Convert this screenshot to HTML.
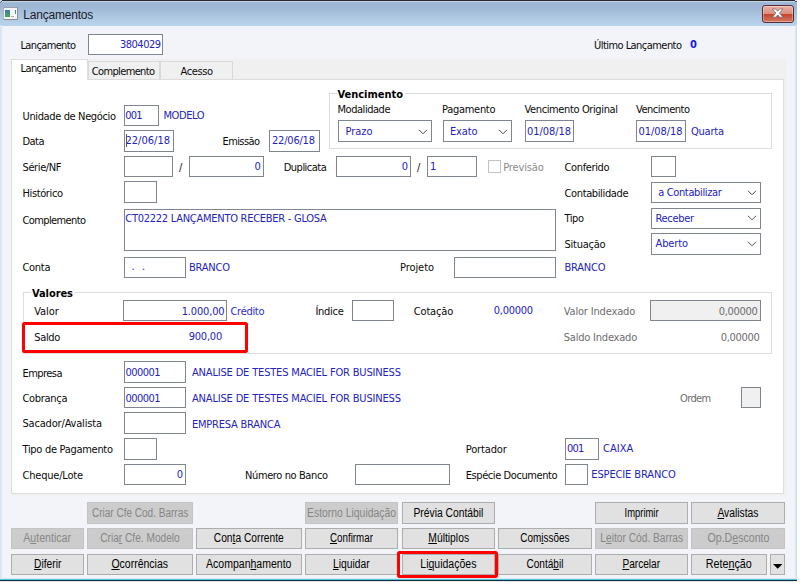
<!DOCTYPE html>
<html lang="pt-BR"><head><meta charset="utf-8"><title>Lançamentos</title>
<style>
html,body{margin:0;padding:0;background:#fff;}
body{width:800px;height:582px;overflow:hidden;position:relative;font-family:"DejaVu Sans Condensed","DejaVu Sans","Liberation Sans",sans-serif;font-stretch:condensed;font-size:11px;}
#win{position:absolute;left:0;top:0;width:797px;height:582px;background:#f3f4fa;overflow:hidden;}
#top{position:absolute;left:0;top:0;width:797px;height:1px;background:#2a2a2a;}
#tb{position:absolute;left:0;top:1px;width:797px;height:24.5px;background:linear-gradient(#c4d4e6 0,#c4d4e6 1px,#9cb5d2 1.6px,#9fb9d6 30%,#aec8e3 65%,#bbd4ed 100%);}
#title{position:absolute;left:23.3px;top:7.6px;font-family:"Liberation Sans",sans-serif;font-size:12px;letter-spacing:-0.2px;line-height:14px;color:#1a1a2a;white-space:nowrap;}
#bl,#br{position:absolute;top:25px;width:2px;height:554px;background:linear-gradient(90deg,#d6e4f5,#dfe9f6);}
#br{background:linear-gradient(90deg,#e2eaf6,#c8dbf0);}
#bl{left:0}#br{left:795px}
#b1{position:absolute;left:0;top:578px;width:797px;height:1px;background:#d9e6f5;}
#b2{position:absolute;left:0;top:579px;width:797px;height:1px;background:#58c4dc;}
#b3{position:absolute;left:0;top:580px;width:797px;height:1px;background:#06343f;}
#b4{position:absolute;left:0;top:581px;width:797px;height:1px;background:#eceae8;}
.px{position:absolute;width:1px;height:1px;}
.t{position:absolute;white-space:nowrap;line-height:14px;height:14px;}
.b{font-weight:bold;}
.bgw{background:#fff;}
.a{position:absolute;}
.in{position:absolute;box-sizing:border-box;background:#fff;border:1px solid #80868e;}
.dis{background:#f0f0f0;}
.chk{position:absolute;box-sizing:border-box;background:#fff;border:1px solid #c3c3c3;}
.caret{position:absolute;background:#555;}
.tabbg{position:absolute;background:#f0f0f0;}
.panel{position:absolute;box-sizing:border-box;background:#fff;border:1px solid #dcdcdc;}
.tab{position:absolute;box-sizing:border-box;background:#f0f0f0;border:1px solid #d9d9d9;border-bottom:none;}
.tab.sel{background:#fff;border-color:#dcdcdc;}
.grp{position:absolute;box-sizing:border-box;border:1px solid #dcdcdc;}
.red{position:absolute;box-sizing:border-box;border:3px solid #ff0000;border-radius:2.5px;}
.btn{position:absolute;box-sizing:border-box;background:#e1e1e1;border:1px solid #adadad;font-family:"Liberation Sans",sans-serif;font-size:12.5px;line-height:19.4px;text-align:center;color:#000;white-space:nowrap;overflow:visible;}
.bt{display:inline-block;transform-origin:50% 50%;margin:0 -20px;}
.bt u{text-underline-offset:1px;}
.bd{background:#cccccc;border-color:#c4c4c4;color:#868686;}
</style></head>
<body>
<div id="win">
<div id="tb"></div><div id="top"></div><div class="px" style="left:0;top:0;width:2px;background:#c9d8ea"></div><div class="px" style="left:0;top:1px;background:#b5c6da"></div><div class="px" style="left:1px;top:1px;background:#5a6572"></div><div class="px" style="left:0;top:2px;background:#6f7d8d"></div><div class="px" style="left:795px;top:0;width:2px;background:#dfe8f2"></div><div class="px" style="left:795px;top:1px;width:2px;background:#2f5560"></div><div style="position:absolute;left:3px;top:7px;width:15px;height:13px;box-sizing:border-box;background:#f6f6f6;border:1px solid #b4b8bd;border-right-color:#8f9398;border-bottom-color:#8a8e94;border-top-color:#9da1a7"><div style="position:absolute;left:1px;top:2px;width:5px;height:7px;background:linear-gradient(160deg,#3a74b6,#3f9a78 60%,#46a45c)"></div><div style="position:absolute;left:11px;top:2px;width:1px;height:4px;background:linear-gradient(#3a66c4,#48a868)"></div><div style="position:absolute;left:7px;top:8px;width:3px;height:1px;background:#aaa"></div></div><div id="title">Lançamentos</div><div id="cls" style="position:absolute;left:762px;top:5px;width:32px;height:18px;box-sizing:border-box;border:1px solid #5b2b3c;border-radius:3px;background:linear-gradient(#e9b0a4 0,#dc8f80 48%,#c4432b 52%,#d27a64 100%);box-shadow:inset 0 0 0 1px rgba(255,255,255,.35);"><svg width="30" height="16" viewBox="0 0 30 16" style="position:absolute;left:0;top:0"><path d="M9.4 3 L12.6 3 L14.7 5.2 L16.8 3 L20 3 L16.5 7.1 L20 11.2 L16.8 11.2 L14.7 9 L12.6 11.2 L9.4 11.2 L12.9 7.1 Z" fill="#fff" stroke="#6a6f7a" stroke-width="0.8"/></svg></div>
<div id="bl"></div><div id="br"></div>
<span id="t1" class="t" style="left:20.5px;top:38.5px;color:#0a0a0a;letter-spacing:-0.644px;">Lançamento</span>
<div class="in" style="left:88px;top:34px;width:75px;height:21px;"></div>
<span id="t2" class="t" style="right:636.5px;top:37.5px;color:#2323c0;letter-spacing:-0.512px;">3804029</span>
<span id="t3" class="t" style="left:594px;top:38.5px;color:#0a0a0a;letter-spacing:-0.547px;">Último Lançamento</span>
<span id="t4" class="t b" style="left:690px;top:37.5px;color:#1414f0;letter-spacing:-0.391px;">0</span>
<div class="tabbg" style="left:11px;top:59px;width:775px;height:436px;"></div>
<div class="panel" style="left:11px;top:79px;width:773px;height:415px;"></div>
<div class="tab" style="left:88px;top:61px;width:72px;height:18px;"></div>
<div class="tab" style="left:160px;top:61px;width:72.5px;height:18px;"></div>
<div class="tab sel" style="left:11px;top:59px;width:77px;height:21px;"></div>
<span id="t5" class="t" style="left:20.5px;top:62px;color:#0a0a0a;letter-spacing:-0.588px;">Lançamento</span>
<span id="t6" class="t" style="left:91.75px;top:64.75px;color:#0a0a0a;letter-spacing:-0.642px;">Complemento</span>
<span id="t7" class="t" style="left:180.5px;top:64.75px;color:#0a0a0a;letter-spacing:-0.395px;">Acesso</span>
<span id="t8" class="t" style="left:22.5px;top:109.5px;color:#0a0a0a;letter-spacing:-0.367px;">Unidade de Negócio</span>
<div class="in" style="left:123.5px;top:105px;width:35.5px;height:21px;"></div>
<span id="t9" class="t" style="left:125.2px;top:108.5px;color:#2323c0;letter-spacing:-0.744px;">001</span>
<span id="t10" class="t" style="left:163.5px;top:108.5px;color:#2323c0;letter-spacing:-0.422px;">MODELO</span>
<span id="t11" class="t" style="left:22.5px;top:135px;color:#0a0a0a;letter-spacing:-0.547px;">Data</span>
<div class="in" style="left:123.5px;top:130px;width:50.5px;height:21.5px;"></div>
<span id="t12" class="t" style="left:125.5px;top:134px;color:#2323c0;letter-spacing:0.008px;">22/06/18</span>
<div class="caret" style="left:125.5px;top:134px;width:1.5px;height:13px;"></div>
<span id="t13" class="t" style="left:222.5px;top:135px;color:#0a0a0a;letter-spacing:-0.596px;">Emissão</span>
<div class="in" style="left:269px;top:130px;width:50.5px;height:21.5px;"></div>
<span id="t14" class="t" style="left:272px;top:134px;color:#2323c0;letter-spacing:-0.206px;">22/06/18</span>
<div class="grp" style="left:329px;top:93px;width:443px;height:56px;"></div>
<span id="t15" class="t b bgw" style="left:336.5px;top:88px;color:#000;letter-spacing:-0.020px;padding:0 2px 0 1px;">Vencimento</span>
<span id="t16" class="t" style="left:337.5px;top:103px;color:#0a0a0a;letter-spacing:-0.463px;">Modalidade</span>
<span id="t17" class="t" style="left:442px;top:103px;color:#0a0a0a;letter-spacing:-0.290px;">Pagamento</span>
<span id="t18" class="t" style="left:524.5px;top:103px;color:#0a0a0a;letter-spacing:-0.377px;">Vencimento Original</span>
<span id="t19" class="t" style="left:636px;top:103px;color:#0a0a0a;letter-spacing:-0.491px;">Vencimento</span>
<div class="in" style="left:338px;top:120px;width:94px;height:22px;"></div>
<span id="t20" class="t" style="left:345.5px;top:124.5px;color:#2323c0;letter-spacing:-0.038px;">Prazo</span>
<svg class="a" style="left:418px;top:128.5px" width="10" height="6" viewBox="0 0 10 6"><path d="M1 0.8 L5 4.8 L9 0.8" fill="none" stroke="#505050" stroke-width="1"/></svg>
<div class="in" style="left:443px;top:120px;width:69px;height:22px;"></div>
<span id="t21" class="t" style="left:450px;top:124.5px;color:#2323c0;letter-spacing:-0.153px;">Exato</span>
<svg class="a" style="left:498px;top:128.5px" width="10" height="6" viewBox="0 0 10 6"><path d="M1 0.8 L5 4.8 L9 0.8" fill="none" stroke="#505050" stroke-width="1"/></svg>
<div class="in" style="left:524.5px;top:120px;width:49.5px;height:22px;"></div>
<span id="t22" class="t" style="left:527px;top:124.5px;color:#2323c0;letter-spacing:-0.063px;">01/08/18</span>
<div class="in" style="left:636px;top:120px;width:50px;height:22px;"></div>
<span id="t23" class="t" style="left:638.5px;top:124.5px;color:#2323c0;letter-spacing:-0.063px;">01/08/18</span>
<span id="t24" class="t" style="left:691px;top:124.5px;color:#2323c0;letter-spacing:-0.227px;">Quarta</span>
<span id="t25" class="t" style="left:22.5px;top:161px;color:#0a0a0a;letter-spacing:-0.388px;">Série/NF</span>
<div class="in" style="left:123.5px;top:156px;width:49.0px;height:21px;"></div>
<span id="t26" class="t" style="left:179px;top:161px;color:#0a0a0a;letter-spacing:0.000px;">/</span>
<div class="in" style="left:188.5px;top:156px;width:75.0px;height:21px;"></div>
<span id="t27" class="t" style="right:536.25px;top:160px;color:#2323c0;letter-spacing:0.000px;">0</span>
<span id="t28" class="t" style="left:283.75px;top:161px;color:#0a0a0a;letter-spacing:-0.516px;">Duplicata</span>
<div class="in" style="left:336px;top:156px;width:75px;height:21px;"></div>
<span id="t29" class="t" style="right:389px;top:160px;color:#2323c0;letter-spacing:0.000px;">0</span>
<span id="t30" class="t" style="left:417px;top:161px;color:#0a0a0a;letter-spacing:0.000px;">/</span>
<div class="in" style="left:427px;top:156px;width:49.5px;height:21px;"></div>
<span id="t31" class="t" style="left:430px;top:160px;color:#2323c0;letter-spacing:0.000px;">1</span>
<div class="chk" style="left:488px;top:160px;width:13px;height:13px;"></div>
<span id="t32" class="t" style="left:503.25px;top:161px;color:#8a8a8a;letter-spacing:-0.154px;">Previsão</span>
<span id="t33" class="t" style="left:564.5px;top:161px;color:#0a0a0a;letter-spacing:-0.370px;">Conferido</span>
<div class="in" style="left:650.5px;top:156px;width:25.0px;height:21px;"></div>
<span id="t34" class="t" style="left:22.5px;top:186.5px;color:#0a0a0a;letter-spacing:-0.387px;">Histórico</span>
<div class="in" style="left:123.5px;top:181px;width:33.5px;height:22px;"></div>
<span id="t35" class="t" style="left:564.5px;top:186.5px;color:#0a0a0a;letter-spacing:-0.371px;">Contabilidade</span>
<div class="in" style="left:650.5px;top:182px;width:110.5px;height:21px;"></div>
<span id="t36" class="t" style="left:658.25px;top:185.5px;color:#2323c0;letter-spacing:-0.365px;">a Contabilizar</span>
<svg class="a" style="left:747px;top:189.5px" width="10" height="6" viewBox="0 0 10 6"><path d="M1 0.8 L5 4.8 L9 0.8" fill="none" stroke="#505050" stroke-width="1"/></svg>
<span id="t37" class="t" style="left:22.5px;top:214px;color:#0a0a0a;letter-spacing:-0.618px;">Complemento</span>
<div class="in" style="left:123.5px;top:209px;width:432.0px;height:42px;"></div>
<span id="t38" class="t" style="left:125.25px;top:212px;color:#2323c0;letter-spacing:-0.265px;">CT02222 LANÇAMENTO RECEBER - GLOSA</span>
<span id="t39" class="t" style="left:564.5px;top:212px;color:#0a0a0a;letter-spacing:-0.431px;">Tipo</span>
<div class="in" style="left:650.5px;top:207.5px;width:110.5px;height:21.5px;"></div>
<span id="t40" class="t" style="left:655.5px;top:212px;color:#2323c0;letter-spacing:-0.326px;">Receber</span>
<svg class="a" style="left:747px;top:215px" width="10" height="6" viewBox="0 0 10 6"><path d="M1 0.8 L5 4.8 L9 0.8" fill="none" stroke="#505050" stroke-width="1"/></svg>
<span id="t41" class="t" style="left:564.5px;top:237.75px;color:#0a0a0a;letter-spacing:-0.260px;">Situação</span>
<div class="in" style="left:650.5px;top:233px;width:110.5px;height:21.5px;"></div>
<span id="t42" class="t" style="left:655.5px;top:236.75px;color:#2323c0;letter-spacing:-0.129px;">Aberto</span>
<svg class="a" style="left:747px;top:240.75px" width="10" height="6" viewBox="0 0 10 6"><path d="M1 0.8 L5 4.8 L9 0.8" fill="none" stroke="#505050" stroke-width="1"/></svg>
<span id="t43" class="t" style="left:22.5px;top:261px;color:#0a0a0a;letter-spacing:-0.297px;">Conta</span>
<div class="in" style="left:123.5px;top:256.5px;width:62.0px;height:21.0px;"></div>
<span id="t44" class="t" style="left:131.5px;top:260px;color:#2323c0;letter-spacing:0.000px;">.</span>
<span id="t45" class="t" style="left:142px;top:260px;color:#2323c0;letter-spacing:0.000px;">.</span>
<span id="t46" class="t" style="left:189px;top:261px;color:#2323c0;letter-spacing:-0.219px;">BRANCO</span>
<span id="t47" class="t" style="left:400px;top:261px;color:#0a0a0a;letter-spacing:-0.072px;">Projeto</span>
<div class="in" style="left:453.5px;top:256.5px;width:102.0px;height:21.0px;"></div>
<span id="t48" class="t" style="left:564.5px;top:261px;color:#2323c0;letter-spacing:-0.219px;">BRANCO</span>
<div class="grp" style="left:23px;top:292px;width:749px;height:62px;"></div>
<span id="t49" class="t b bgw" style="left:31px;top:286.5px;color:#000;letter-spacing:-0.069px;padding:0 2px 0 1px;">Valores</span>
<span id="t50" class="t" style="left:34.25px;top:305px;color:#0a0a0a;letter-spacing:-0.089px;">Valor</span>
<div class="in" style="left:122.5px;top:300px;width:104.5px;height:21px;"></div>
<span id="t51" class="t" style="right:572.5px;top:305px;color:#2323c0;letter-spacing:-0.151px;">1.000,00</span>
<span id="t52" class="t" style="left:230.5px;top:305px;color:#2a2ae0;letter-spacing:-0.299px;">Crédito</span>
<span id="t53" class="t" style="left:315.5px;top:305px;color:#0a0a0a;letter-spacing:-0.304px;">Índice</span>
<div class="in" style="left:352px;top:300px;width:42px;height:21px;"></div>
<span id="t54" class="t" style="left:413.75px;top:305px;color:#0a0a0a;letter-spacing:-0.162px;">Cotação</span>
<span id="t55" class="t" style="left:493.75px;top:304px;color:#2323c0;letter-spacing:-0.279px;">0,00000</span>
<span id="t56" class="t" style="left:563.75px;top:305px;color:#6d6d6d;letter-spacing:-0.164px;">Valor Indexado</span>
<div class="in dis" style="left:650px;top:300px;width:110.5px;height:21px;"></div>
<span id="t57" class="t" style="right:39.5px;top:305px;color:#6d6d6d;letter-spacing:-0.319px;">0,00000</span>
<span id="t58" class="t" style="left:34.25px;top:331px;color:#0a0a0a;letter-spacing:-0.359px;">Saldo</span>
<span id="t59" class="t" style="right:575px;top:330px;color:#2323c0;letter-spacing:-0.226px;">900,00</span>
<span id="t60" class="t" style="left:563.75px;top:331px;color:#6d6d6d;letter-spacing:-0.208px;">Saldo Indexado</span>
<span id="t61" class="t" style="right:37.5px;top:331px;color:#6d6d6d;letter-spacing:-0.319px;">0,00000</span>
<div class="red" style="left:22px;top:322px;width:225.6px;height:31px;"></div>
<span id="t62" class="t" style="left:22.5px;top:366.5px;color:#0a0a0a;letter-spacing:-0.553px;">Empresa</span>
<div class="in" style="left:123.5px;top:361px;width:62.0px;height:21.5px;"></div>
<span id="t63" class="t" style="left:125.5px;top:365.5px;color:#2323c0;letter-spacing:-0.555px;">000001</span>
<span id="t64" class="t" style="left:192px;top:365.5px;color:#2323c0;letter-spacing:-0.171px;">ANALISE DE TESTES MACIEL FOR BUSINESS</span>
<span id="t65" class="t" style="left:22.5px;top:391.5px;color:#0a0a0a;letter-spacing:-0.310px;">Cobrança</span>
<div class="in" style="left:123.5px;top:387px;width:62.0px;height:21px;"></div>
<span id="t66" class="t" style="left:125.5px;top:392px;color:#2323c0;letter-spacing:-0.555px;">000001</span>
<span id="t67" class="t" style="left:192px;top:392px;color:#2323c0;letter-spacing:-0.171px;">ANALISE DE TESTES MACIEL FOR BUSINESS</span>
<span id="t68" class="t" style="left:680px;top:391.5px;color:#6d6d6d;letter-spacing:-0.609px;">Ordem</span>
<div class="in dis" style="left:741px;top:387px;width:20px;height:21px;"></div>
<span id="t69" class="t" style="left:22.5px;top:417.25px;color:#0a0a0a;letter-spacing:-0.183px;">Sacador/Avalista</span>
<div class="in" style="left:123.5px;top:412px;width:62.0px;height:22px;"></div>
<span id="t70" class="t" style="left:192px;top:418px;color:#2323c0;letter-spacing:-0.220px;">EMPRESA BRANCA</span>
<span id="t71" class="t" style="left:22.5px;top:443px;color:#0a0a0a;letter-spacing:-0.299px;">Tipo de Pagamento</span>
<div class="in" style="left:123.5px;top:438px;width:33.5px;height:21.5px;"></div>
<span id="t72" class="t" style="left:465.75px;top:443px;color:#0a0a0a;letter-spacing:-0.149px;">Portador</span>
<div class="in" style="left:565px;top:438px;width:33.5px;height:21.5px;"></div>
<span id="t73" class="t" style="left:567px;top:442px;color:#2323c0;letter-spacing:-0.744px;">001</span>
<span id="t74" class="t" style="left:603px;top:442px;color:#2323c0;letter-spacing:0.025px;">CAIXA</span>
<span id="t75" class="t" style="left:22.5px;top:468.5px;color:#0a0a0a;letter-spacing:-0.210px;">Cheque/Lote</span>
<div class="in" style="left:123.5px;top:464px;width:62.0px;height:21px;"></div>
<span id="t76" class="t" style="right:614px;top:467.5px;color:#2323c0;letter-spacing:0.000px;">0</span>
<span id="t77" class="t" style="left:245px;top:468.5px;color:#0a0a0a;letter-spacing:-0.394px;">Número no Banco</span>
<div class="in" style="left:355px;top:464px;width:94.5px;height:21px;"></div>
<span id="t78" class="t" style="left:465.75px;top:468.5px;color:#0a0a0a;letter-spacing:-0.424px;">Espécie Documento</span>
<div class="in" style="left:565px;top:464px;width:22.5px;height:21px;"></div>
<span id="t79" class="t" style="left:591.25px;top:467.5px;color:#2323c0;letter-spacing:-0.121px;">ESPECIE BRANCO</span>
<div class="btn bd" style="left:87px;top:502px;width:106px;height:22px;line-height:20.4px"><span id="b0_1" class="bt" style="transform:scaleX(0.8021)">Criar Cfe Cod. Barras</span></div>
<div class="btn bd" style="left:305px;top:502px;width:93px;height:22px;line-height:20.4px"><span id="b0_3" class="bt" style="transform:scaleX(0.8318)">Estorno Liquidação</span></div>
<div class="btn" style="left:401.5px;top:502px;width:93.5px;height:22px;line-height:20.4px"><span id="b0_4" class="bt" style="transform:scaleX(0.8235)">Prévia Contábil</span></div>
<div class="btn" style="left:595px;top:502px;width:93px;height:22px;line-height:20.4px"><span id="b0_6" class="bt" style="transform:scaleX(0.7533)">Imprimir</span></div>
<div class="btn" style="left:691px;top:502px;width:94px;height:22px;line-height:20.4px"><span id="b0_7" class="bt" style="transform:scaleX(0.8240)"><u>A</u>valistas</span></div>
<div class="btn bd" style="left:11px;top:528px;width:73px;height:21px;line-height:19.4px"><span id="b1_0" class="bt" style="transform:scaleX(0.8482)">A<u>u</u>tenticar</span></div>
<div class="btn bd" style="left:87px;top:528px;width:106px;height:21px;line-height:19.4px"><span id="b1_1" class="bt" style="transform:scaleX(0.8112)">Cria<u>r</u> Cfe. Modelo</span></div>
<div class="btn" style="left:196px;top:528px;width:106px;height:21px;line-height:19.4px"><span id="b1_2" class="bt" style="transform:scaleX(0.8176)">Con<u>t</u>a Corrente</span></div>
<div class="btn" style="left:305px;top:528px;width:93px;height:21px;line-height:19.4px"><span id="b1_3" class="bt" style="transform:scaleX(0.7818)"><u>C</u>onfirmar</span></div>
<div class="btn" style="left:401.5px;top:528px;width:93.5px;height:21px;line-height:19.4px"><span id="b1_4" class="bt" style="transform:scaleX(0.8265)"><u>M</u>últiplos</span></div>
<div class="btn" style="left:498px;top:528px;width:94px;height:21px;line-height:19.4px"><span id="b1_5" class="bt" style="transform:scaleX(0.7944)">Com<u>i</u>ssões</span></div>
<div class="btn bd" style="left:595px;top:528px;width:93px;height:21px;line-height:19.4px"><span id="b1_6" class="bt" style="transform:scaleX(0.8158)">L<u>e</u>itor Cód. Barras</span></div>
<div class="btn bd" style="left:691px;top:528px;width:94px;height:21px;line-height:19.4px"><span id="b1_7" class="bt" style="transform:scaleX(0.8493)">Op.D<u>e</u>sconto</span></div>
<div class="btn" style="left:11px;top:554px;width:73px;height:21px;line-height:19.4px"><span id="b2_0" class="bt" style="transform:scaleX(0.8182)"><u>D</u>iferir</span></div>
<div class="btn" style="left:87px;top:554px;width:106px;height:21px;line-height:19.4px"><span id="b2_1" class="bt" style="transform:scaleX(0.8396)"><u>O</u>corrências</span></div>
<div class="btn" style="left:196px;top:554px;width:106px;height:21px;line-height:19.4px"><span id="b2_2" class="bt" style="transform:scaleX(0.8416)">Acompan<u>h</u>amento</span></div>
<div class="btn" style="left:305px;top:554px;width:93px;height:21px;line-height:19.4px"><span id="b2_3" class="bt" style="transform:scaleX(0.8239)"><u>L</u>iquidar</span></div>
<div class="btn" style="left:401.5px;top:554px;width:93.5px;height:21px;line-height:19.4px"><span id="b2_4" class="bt" style="transform:scaleX(0.8396)">Li<u>q</u>uidações</span></div>
<div class="btn" style="left:498px;top:554px;width:94px;height:21px;line-height:19.4px"><span id="b2_5" class="bt" style="transform:scaleX(0.8043)">Contá<u>b</u>il</span></div>
<div class="btn" style="left:595px;top:554px;width:93px;height:21px;line-height:19.4px"><span id="b2_6" class="bt" style="transform:scaleX(0.8085)"><u>P</u>arcelar</span></div>
<div class="btn" style="left:691px;top:554px;width:76px;height:21px;line-height:19.4px"><span id="b2_7" class="bt" style="transform:scaleX(0.8611)">Rete<u>n</u>ção</span></div>
<div class="btn" style="left:770px;top:554px;width:15px;height:21px;"><svg width="9" height="5" viewBox="0 0 9 5" style="position:absolute;left:1.6px;top:8.5px"><path d="M0 0H9.4L4.7 4.7Z" fill="#000"/></svg></div>
<div class="red" style="left:396.6px;top:550.6px;width:101px;height:27.3px;"></div>
<div id="b1"></div><div id="b2"></div><div id="b3"></div><div id="b4"></div>
</div>
</body></html>
